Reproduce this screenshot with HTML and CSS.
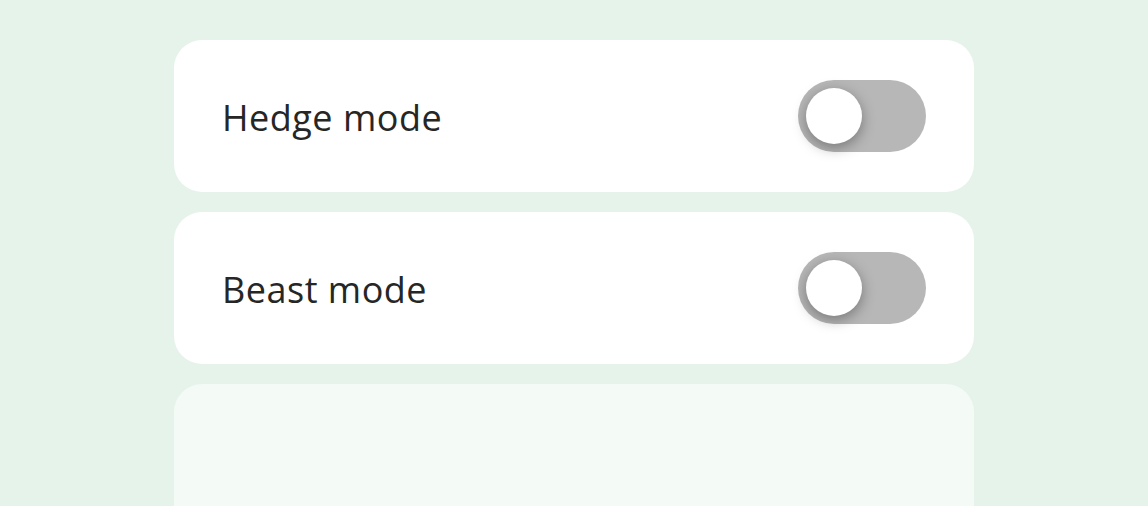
FILE: index.html
```html
<!DOCTYPE html>
<html lang="en">
<head>
	<meta charset="UTF-8">
	<meta name="viewport" content="width=device-width, initial-scale=1.0">
	<title>Settings</title>
	<link rel="stylesheet" href="styles.css">
</head>
<body>
	<div class="list">
		<div class="card">
			<span class="label">Hedge mode</span>
			<label class="switch">
				<input type="checkbox">
				<span class="knob"></span>
			</label>
		</div>
		<div class="card">
			<span class="label">Beast mode</span>
			<label class="switch">
				<input type="checkbox">
				<span class="knob"></span>
			</label>
		</div>
		<div class="card card-empty"></div>
	</div>
</body>
</html>
```

FILE: styles.css
```css
* {
    margin: 0;
    padding: 0;
    box-sizing: border-box;
}

body {
    background: #e6f3ea;
    font-family: "Open Sans", "Liberation Sans", sans-serif;
    overflow: hidden;
}

.list {
    width: 800px;
    margin: 40px auto 0 174px;
    display: flex;
    flex-direction: column;
    gap: 20px;
}

.card {
    height: 152px;
    background: #fff;
    border-radius: 28px;
    padding: 0 48px;
    display: flex;
    align-items: center;
    justify-content: space-between;
}

.card-empty {
    background: #f4faf6;
}

.label {
    font-size: 36px;
    color: #262626;
    letter-spacing: 0.5px;
    line-height: 1;
    padding-top: 4px;
}

.switch {
    position: relative;
    width: 128px;
    height: 72px;
    border-radius: 36px;
    background: #b7b7b7;
    cursor: pointer;
}

.switch input {
    display: none;
}

.knob {
    position: absolute;
    left: 8px;
    top: 8px;
    width: 56px;
    height: 56px;
    border-radius: 50%;
    background: #fff;
    box-shadow: 0 4px 14px rgba(0, 0, 0, .35);
}
```
